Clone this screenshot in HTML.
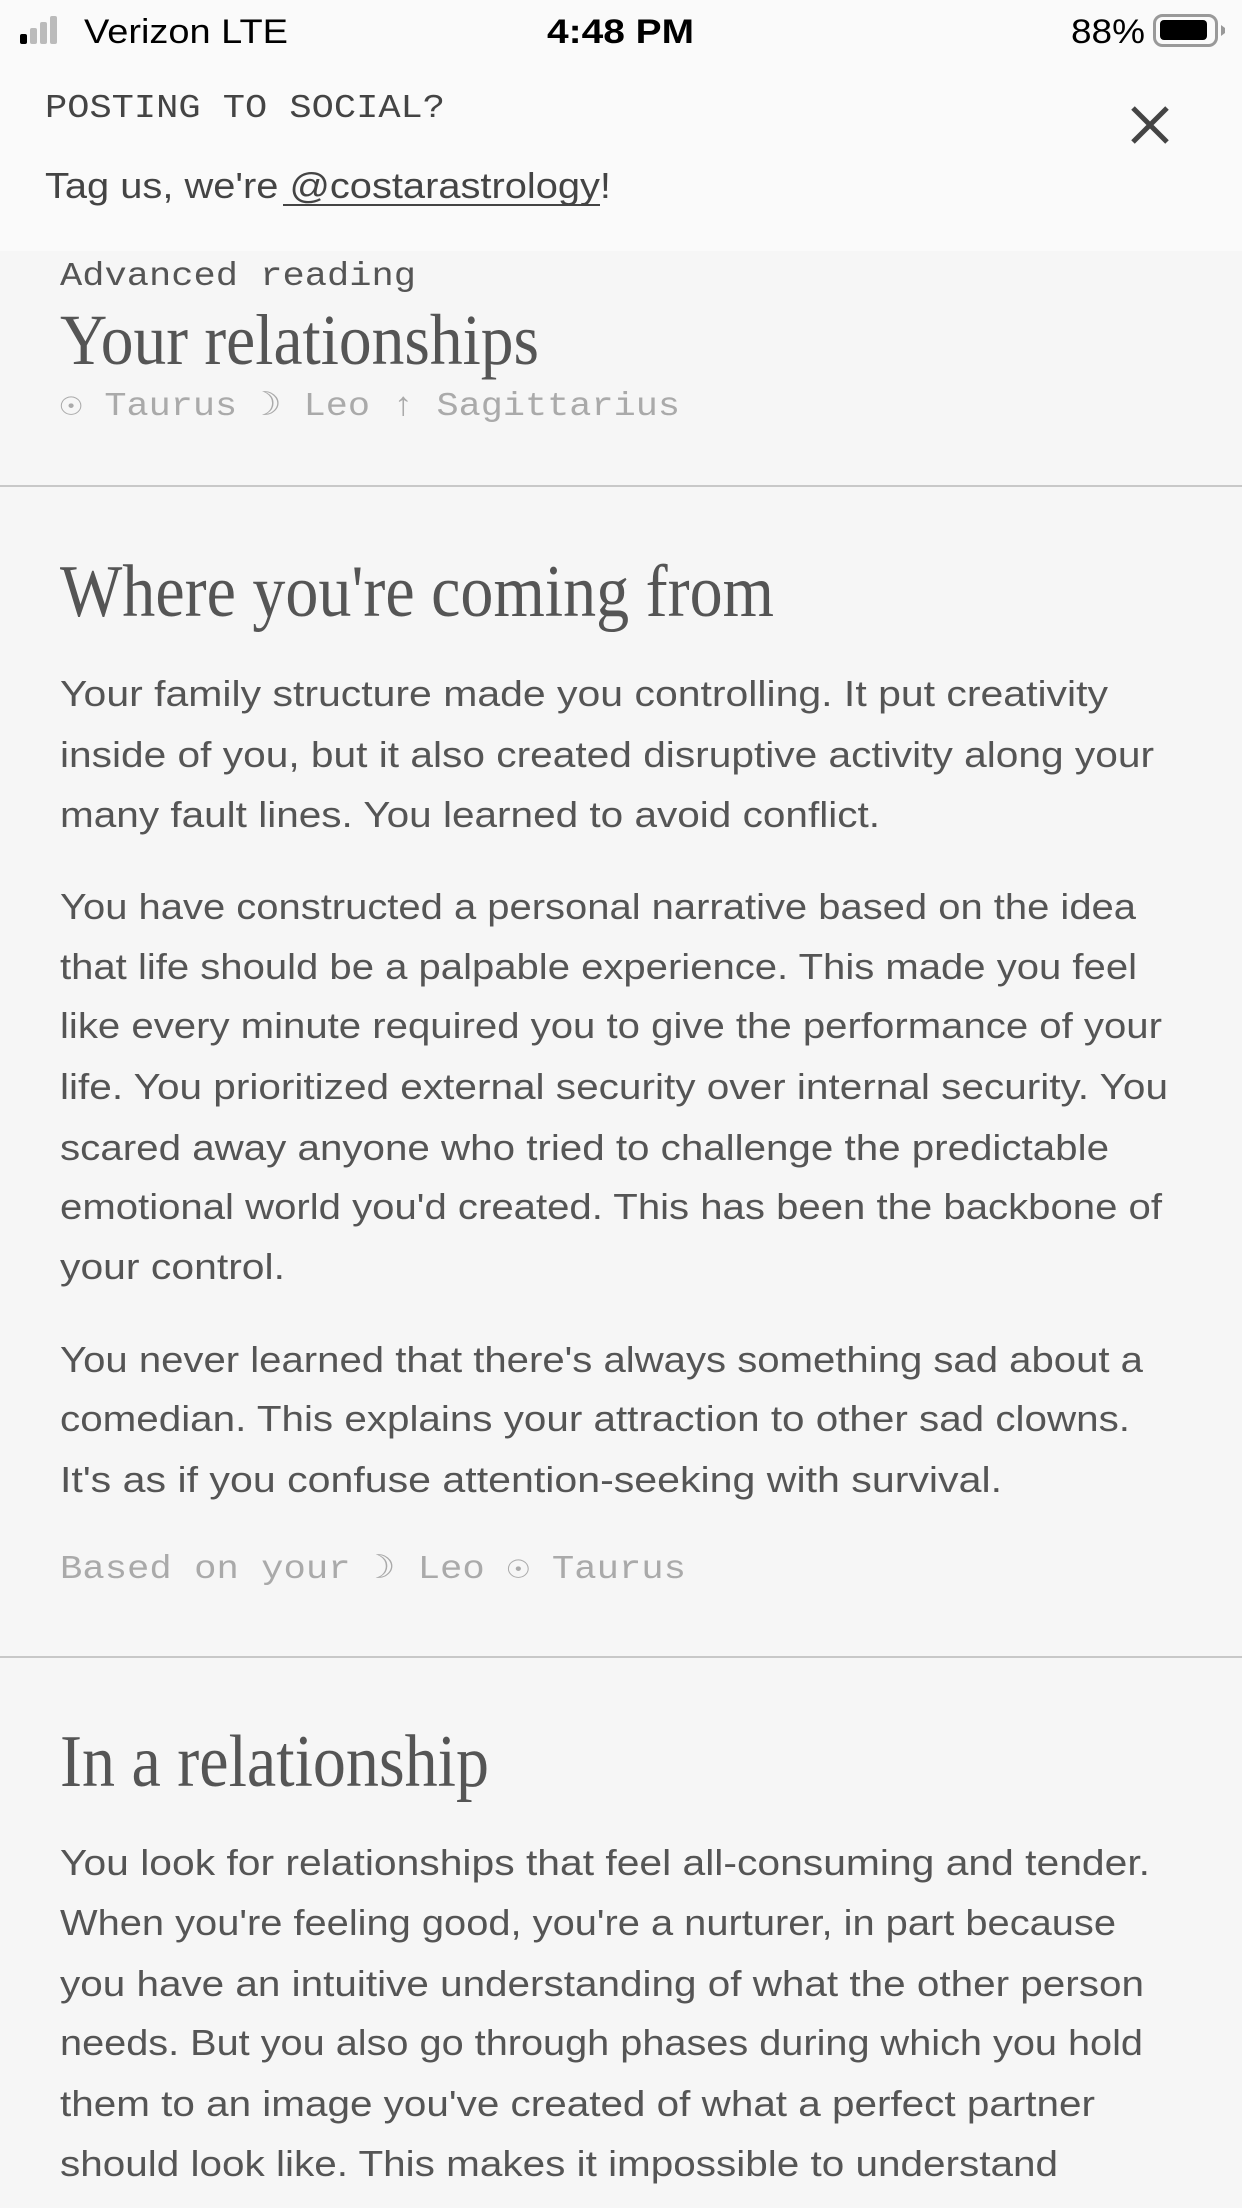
<!DOCTYPE html>
<html><head><meta charset="utf-8"><style>
html,body{margin:0;padding:0;width:1242px;height:2208px;overflow:hidden;background:#f6f6f6}
svg{display:block}
.p{font-family:"Liberation Sans",sans-serif;font-size:36px;fill:#555}
.m{font-family:"Liberation Mono",monospace;font-size:33px}
.h{font-family:"Liberation Serif",serif;fill:#555}
</style></head><body>
<svg width="1242" height="2208" viewBox="0 0 1242 2208" xmlns="http://www.w3.org/2000/svg">
<rect x="0" y="0" width="1242" height="251" fill="#fafafa"/>
<rect x="0" y="251" width="1242" height="1957" fill="#f6f6f6"/>
<!-- status bar -->
<rect x="20" y="34" width="7" height="10" rx="2" fill="#000"/>
<rect x="30" y="28" width="7" height="16" rx="2" fill="#bbb"/>
<rect x="40" y="22" width="7" height="22" rx="2" fill="#bbb"/>
<rect x="50" y="16" width="7" height="28" rx="2" fill="#bbb"/>
<text x="84" y="43" font-family="Liberation Sans,sans-serif" font-size="34" fill="#000" textLength="204" lengthAdjust="spacingAndGlyphs">Verizon  LTE</text>
<text x="547" y="43" font-family="Liberation Sans,sans-serif" font-size="34" font-weight="bold" fill="#000" textLength="147" lengthAdjust="spacingAndGlyphs">4:48 PM</text>
<text x="1071" y="43" font-family="Liberation Sans,sans-serif" font-size="34" fill="#000" textLength="74" lengthAdjust="spacingAndGlyphs">88%</text>
<rect x="1154.5" y="15.5" width="62" height="30" rx="8" fill="none" stroke="#999" stroke-width="3"/>
<rect x="1160" y="20" width="47" height="20" rx="4" fill="#000"/>
<path d="M1221 25 L1225 28 L1225 33 L1221 36 Z" fill="#999"/>
<!-- banner -->
<text x="45" y="117" class="m" fill="#444" textLength="400" lengthAdjust="spacingAndGlyphs">POSTING TO SOCIAL?</text>
<text x="45" y="198" class="p" fill="#444" style="fill:#444" textLength="566" lengthAdjust="spacingAndGlyphs">Tag us, we're @costarastrology!</text>
<rect x="283" y="204" width="317" height="2" fill="#444"/>
<path d="M1133 108 L1167 142 M1167 108 L1133 142" stroke="#444" stroke-width="5"/>
<!-- header -->
<text x="60" y="285" class="m" fill="#555" textLength="356" lengthAdjust="spacingAndGlyphs">Advanced reading</text>
<text x="60" y="364" class="h" font-size="72" textLength="479" lengthAdjust="spacingAndGlyphs">Your relationships</text>
<text x="60" y="415" class="m" fill="#aaa" textLength="620" lengthAdjust="spacingAndGlyphs">☉ Taurus ☽ Leo ↑ Sagittarius</text>
<rect x="0" y="485" width="1242" height="2" fill="#c8c8c8"/>
<text x="60" y="616" class="h" font-size="74" textLength="714" lengthAdjust="spacingAndGlyphs">Where you're coming from</text>
<text x="60" y="706" class="p" textLength="1048" lengthAdjust="spacingAndGlyphs">Your family structure made you controlling. It put creativity</text>
<text x="60" y="767" class="p" textLength="1094" lengthAdjust="spacingAndGlyphs">inside of you, but it also created disruptive activity along your</text>
<text x="60" y="827" class="p" textLength="820" lengthAdjust="spacingAndGlyphs">many fault lines. You learned to avoid conflict.</text>
<text x="60" y="919" class="p" textLength="1076" lengthAdjust="spacingAndGlyphs">You have constructed a personal narrative based on the idea</text>
<text x="60" y="979" class="p" textLength="1077" lengthAdjust="spacingAndGlyphs">that life should be a palpable experience. This made you feel</text>
<text x="60" y="1038" class="p" textLength="1102" lengthAdjust="spacingAndGlyphs">like every minute required you to give the performance of your</text>
<text x="60" y="1099" class="p" textLength="1108" lengthAdjust="spacingAndGlyphs">life. You prioritized external security over internal security. You</text>
<text x="60" y="1160" class="p" textLength="1049" lengthAdjust="spacingAndGlyphs">scared away anyone who tried to challenge the predictable</text>
<text x="60" y="1219" class="p" textLength="1102" lengthAdjust="spacingAndGlyphs">emotional world you'd created. This has been the backbone of</text>
<text x="60" y="1279" class="p" textLength="225" lengthAdjust="spacingAndGlyphs">your control.</text>
<text x="60" y="1372" class="p" textLength="1083" lengthAdjust="spacingAndGlyphs">You never learned that there's always something sad about a</text>
<text x="60" y="1431" class="p" textLength="1070" lengthAdjust="spacingAndGlyphs">comedian. This explains your attraction to other sad clowns.</text>
<text x="60" y="1492" class="p" textLength="942" lengthAdjust="spacingAndGlyphs">It's as if you confuse attention-seeking with survival.</text>
<text x="60" y="1578" class="m" fill="#aaa" textLength="626" lengthAdjust="spacingAndGlyphs">Based on your ☽ Leo ☉ Taurus</text>
<rect x="0" y="1656" width="1242" height="2" fill="#c8c8c8"/>
<text x="60" y="1786" class="h" font-size="74" textLength="429" lengthAdjust="spacingAndGlyphs">In a relationship</text>
<text x="60" y="1875" class="p" textLength="1090" lengthAdjust="spacingAndGlyphs">You look for relationships that feel all-consuming and tender.</text>
<text x="60" y="1935" class="p" textLength="1056" lengthAdjust="spacingAndGlyphs">When you're feeling good, you're a nurturer, in part because</text>
<text x="60" y="1996" class="p" textLength="1084" lengthAdjust="spacingAndGlyphs">you have an intuitive understanding of what the other person</text>
<text x="60" y="2055" class="p" textLength="1083" lengthAdjust="spacingAndGlyphs">needs. But you also go through phases during which you hold</text>
<text x="60" y="2116" class="p" textLength="1035" lengthAdjust="spacingAndGlyphs">them to an image you've created of what a perfect partner</text>
<text x="60" y="2176" class="p" textLength="998" lengthAdjust="spacingAndGlyphs">should look like. This makes it impossible to understand</text>
</svg>
</body></html>
